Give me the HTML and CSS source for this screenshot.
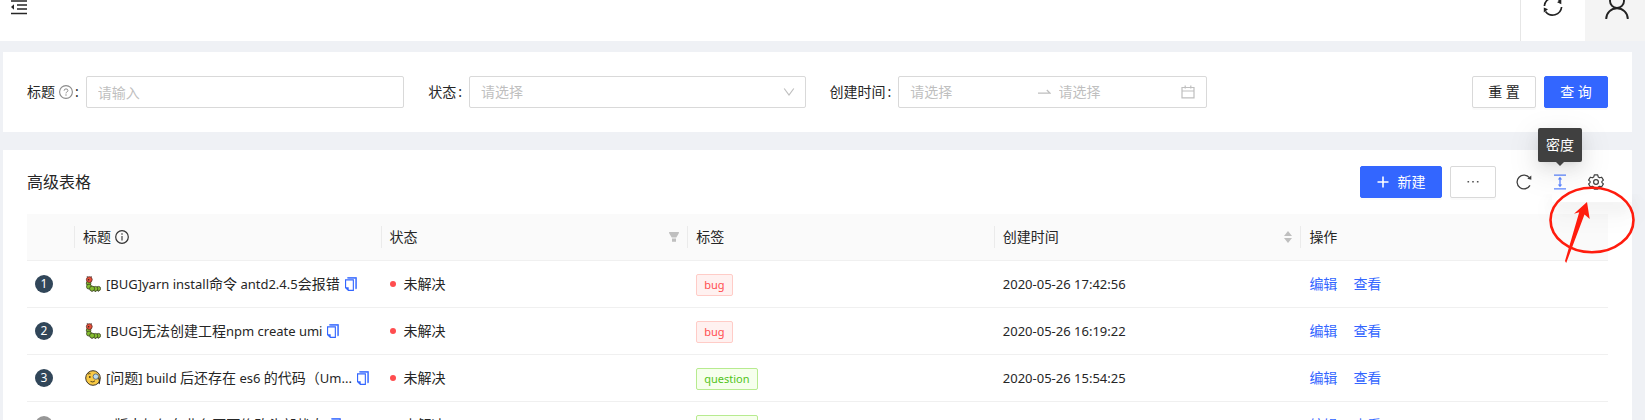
FILE: index.html
```
<!DOCTYPE html>
<html lang="zh-CN">
<head>
<meta charset="utf-8">
<meta name="viewport" content="width=device-width, initial-scale=1">
<title>高级表格</title>
<link rel="stylesheet" href="styles.css">
</head>
<body>
<svg class="sprite" aria-hidden="true">
  <symbol id="i-copy" viewBox="0 0 14 16"><path d="M4 1h8.200v12" fill="none" stroke="#9db8ff" stroke-width="1.600"/><path d="M3 .9h9.500v11.500M1.200 3h8.300v11.300H4.200L1.200 11.500z" fill="none" stroke="#3366ff" stroke-width="1.200"/><path d="M1 11h3.500v3.500z" fill="#3366ff"/></symbol>
  <symbol id="i-bug" viewBox="0 0 16 16"><g fill="#84bd2f" stroke="#38401f" stroke-width=".8"><circle cx="3.600" cy="7.200" r="2.300"/><circle cx="4" cy="10.600" r="2.500"/><circle cx="13.400" cy="12.600" r="2.200"/><circle cx="10.400" cy="12.800" r="2.400"/><circle cx="7.100" cy="12.600" r="2.500"/></g><path d="M7 15v.8M10.400 15v.8M13.300 14.600v1" stroke="#38401f"/><circle cx="4.300" cy="3.600" r="2.900" fill="#e8503a" stroke="#5a2a22" stroke-width=".8"/><circle cx="3.600" cy="3.700" r=".8" fill="#322"/><path d="M2.700 1 2 .2M5.800 1l.7-.8" stroke="#322" stroke-width=".8"/></symbol>
  <symbol id="i-monocle" viewBox="0 0 16 16"><circle cx="8" cy="8" r="7.300" fill="#f8c944" stroke="#40372a" stroke-width="1"/><circle cx="10.800" cy="6.600" r="2.700" fill="#b9dcef" stroke="#5c6670" stroke-width=".9"/><path d="M13.600 7.500q1.500 3 .5 6.500" fill="none" stroke="#333" stroke-width="1.300"/><path d="M3 4.200q1.200-1 2.600-.4M5.500 11.400q2.500 1.500 4.500-.6" fill="none" stroke="#4b3a18" stroke-width=".9"/><circle cx="4.800" cy="7" r=".9" fill="#4b3a18"/></symbol>
</svg>

<header class="topbar">
  <button class="fold" type="button" aria-label="收起菜单"><svg width="16" height="15" viewBox="0 0 16 15"><path d="M0 1h16M6 5h10M6 9h10M0 13.500h16" stroke="#262626" stroke-width="1.400"/><path d="M0 7l3-2.700v5.400z" fill="#262626"/></svg></button>
  <div class="topbar-right">
    <button class="top-action sync" type="button" aria-label="刷新"><svg width="22" height="18" viewBox="0 0 22 18"><path d="M2.400 6A9 9 0 0 1 18 .8M19.600 7A9 9 0 0 1 3.500 11.500" fill="none" stroke="#222" stroke-width="1.700"/><path d="M19.300-.8v5l-4.200-2zM1.800 12.500v-5l4.200 1.800z" fill="#222"/></svg></button>
    <button class="top-action user" type="button" aria-label="用户"><svg width="24" height="19" viewBox="0 0 24 19"><circle cx="12" cy="1" r="7" fill="none" stroke="#222" stroke-width="1.900"/><path d="M1.200 19a10.800 10.800 0 0 1 21.600 0" fill="none" stroke="#222" stroke-width="1.900"/></svg></button>
  </div>
</header>

<main class="content">
  <form class="card search">
    <div class="field">
      <label for="f-title">标题<svg class="hint" width="14" height="14" viewBox="0 0 14 14"><circle cx="7" cy="7" r="6.400" fill="none" stroke="#8c8c8c" stroke-width="1.100"/><path d="M5.100 5.700q0-1.800 1.900-1.800t1.900 1.600q0 1.100-1.200 1.600-.7.300-.7 1.300" fill="none" stroke="#8c8c8c"/><circle cx="7" cy="10" r=".7" fill="#8c8c8c"/></svg><span class="colon">:</span></label>
      <input id="f-title" class="control" type="text" placeholder="请输入">
    </div>
    <div class="field">
      <label for="f-state">状态<span class="colon">:</span></label>
      <div class="select-wrap">
        <select id="f-state" class="control"><option>请选择</option></select>
        <svg class="chevron" width="12" height="12" viewBox="0 0 12 12"><path d="M1.200 2.500 6 9l4.800-6.500" fill="none" stroke="#bfbfbf" stroke-width="1.200"/></svg>
      </div>
    </div>
    <div class="field">
      <label for="f-start">创建时间<span class="colon">:</span></label>
      <div class="control range">
        <input id="f-start" type="text" placeholder="请选择">
        <svg width="14" height="14" viewBox="0 0 14 14"><path d="M1 8.200h12L9.800 5" fill="none" stroke="#bfbfbf" stroke-width="1.200"/></svg>
        <input type="text" placeholder="请选择" aria-label="结束时间">
        <svg class="calendar" width="14" height="14" viewBox="0 0 14 14"><path d="M1 2.500h12v10.400H1zM1 6h12M4.200.5v3M9.800.5v3" fill="none" stroke="#bfbfbf" stroke-width="1.200"/></svg>
      </div>
    </div>
    <div class="actions">
      <button class="btn" type="reset">重 置</button>
      <button class="btn primary" type="button">查 询</button>
    </div>
  </form>

  <section class="card list">
    <div class="toolbar">
      <h1>高级表格</h1>
      <div class="tools">
        <button class="btn primary create" type="button"><svg width="12" height="12" viewBox="0 0 12 12"><path d="M6 .5v11M.5 6h11" stroke="#fff" stroke-width="1.600"/></svg>新建</button>
        <button class="btn more" type="button" aria-label="更多"><svg width="12" height="4" viewBox="0 0 12 4"><path d="M.5 1h1.600v1.600H.5zM5.200 1h1.600v1.600H5.200zM9.900 1h1.600v1.600H9.900z" fill="#555"/></svg></button>
        <div class="icons">
          <button class="icon" type="button" aria-label="刷新列表"><svg width="16" height="16" viewBox="0 0 16 16"><path d="M14 11.400A6.900 6.900 0 1 1 13.400 3.700" fill="none" stroke="#404040" stroke-width="1.300"/><path d="M15.300 1.600v4.200l-4-1z" fill="#404040"/></svg></button>
          <button class="icon density" type="button" aria-label="密度"><svg width="16" height="16" viewBox="0 0 16 16"><path d="M2 1.200h12M2 14.800h12M8 4v8" fill="none" stroke="#5c85ff" stroke-width="1.300"/><path d="M5.800 5.500 8 2.800l2.200 2.700zM5.800 10.500 8 13.200l2.200-2.700z" fill="#5c85ff"/></svg><span class="tip" role="tooltip">密度</span></button>
          <button class="icon" type="button" aria-label="设置"><svg width="16" height="16" viewBox="0 0 16 16"><path d="M6.300.9h3.400l.5 2 1.500.9 2-.6 1.700 2.900-1.500 1.300v1.200l1.500 1.300-1.700 2.900-2-.6-1.500.9-.5 2H6.300l-.5-2-1.500-.9-2 .6L.6 9.900l1.500-1.300V7.400L.6 6.100l1.700-2.900 2 .6 1.500-.9z" fill="none" stroke="#404040" stroke-width="1.200" stroke-linejoin="round"/><circle cx="8" cy="8" r="2.400" fill="none" stroke="#404040" stroke-width="1.200"/></svg></button>
        </div>
      </div>
      <div class="dropdown"></div>
      <svg class="mark" width="88" height="80" viewBox="0 0 88 80" aria-hidden="true"><ellipse cx="44" cy="35" rx="41.500" ry="32.300" fill="none" stroke="#ff1c0e" stroke-width="2.600"/><path d="M39 17 26 28.800l5.200-1.500L17 76l1.200 2L36.500 29.500l5.200 4.600z" fill="#ff1c0e"/></svg>
    </div>

    <table>
      <colgroup><col class="c-index"><col><col><col><col><col></colgroup>
      <thead>
        <tr>
          <th aria-label="序号"></th>
          <th><span class="head">标题<svg width="14" height="14" viewBox="0 0 14 14"><circle cx="7" cy="7" r="6.300" fill="none" stroke="#333" stroke-width="1.200"/><path d="M7 6v4.400" stroke="#333" stroke-width="1.100"/><circle cx="7" cy="4" r=".8" fill="#333"/></svg></span></th>
          <th><span class="head between">状态<svg width="12" height="12" viewBox="0 0 12 12"><path d="M1 1h10l-.3 1.500L8.300 6.500H3.700L1.300 2.500zM4 7.400h4v3.300H4z" fill="#bfbfbf"/></svg></span></th>
          <th>标签</th>
          <th><span class="head between sort">创建时间<svg width="8" height="12" viewBox="0 0 8 12"><path d="M4 0l4 5H0zM4 12l4-5H0z" fill="#bfbfbf"/></svg></span></th>
          <th>操作</th>
        </tr>
      </thead>
      <tbody>
        <tr>
          <td><span class="num">1</span></td>
          <td><div class="title"><svg class="emoji"><use href="#i-bug"/></svg><span class="text"><span class="en">[BUG]yarn install</span>命令<span class="en"> antd2.4.5</span>会报错</span><button class="copy" type="button" aria-label="复制"><svg><use href="#i-copy"/></svg></button></div></td>
          <td><span class="status">未解决</span></td>
          <td><span class="tag red">bug</span></td>
          <td class="en">2020-05-26 17:42:56</td>
          <td><span class="links"><a href="#">编辑</a><a href="#">查看</a></span></td>
        </tr>
        <tr>
          <td><span class="num">2</span></td>
          <td><div class="title"><svg class="emoji"><use href="#i-bug"/></svg><span class="text"><span class="en">[BUG]</span>无法创建工程<span class="en">npm create umi</span></span><button class="copy" type="button" aria-label="复制"><svg><use href="#i-copy"/></svg></button></div></td>
          <td><span class="status">未解决</span></td>
          <td><span class="tag red">bug</span></td>
          <td class="en">2020-05-26 16:19:22</td>
          <td><span class="links"><a href="#">编辑</a><a href="#">查看</a></span></td>
        </tr>
        <tr>
          <td><span class="num">3</span></td>
          <td><div class="title"><svg class="emoji"><use href="#i-monocle"/></svg><span class="text"><span class="en">[</span>问题<span class="en">] build </span>后还存在<span class="en"> es6 </span>的代码（<span class="en">Um...</span></span><button class="copy" type="button" aria-label="复制"><svg><use href="#i-copy"/></svg></button></div></td>
          <td><span class="status">未解决</span></td>
          <td><span class="tag green">question</span></td>
          <td class="en">2020-05-26 15:54:25</td>
          <td><span class="links"><a href="#">编辑</a><a href="#">查看</a></span></td>
        </tr>
        <tr>
          <td><span class="num rest">4</span></td>
          <td><div class="title"><span class="text"><span class="en">2.3.1</span>版本如何在业务页面修改头部状态</span><button class="copy" type="button" aria-label="复制"><svg><use href="#i-copy"/></svg></button></div></td>
          <td><span class="status">未解决</span></td>
          <td><span class="tag green">question</span></td>
          <td class="en">2020-05-26 15:46:55</td>
          <td><span class="links"><a href="#">编辑</a><a href="#">查看</a></span></td>
        </tr>
      </tbody>
    </table>
  </section>
</main>
</body>
</html>
```
FILE: styles.css
```
* { box-sizing: border-box; }
html { scrollbar-width: none; }
body {
  margin: 0;
  background: #eff1f5;
  color: #262626;
  font: 14px/22px "Noto Sans", "Noto Sans CJK SC", sans-serif;
}
button, input, select { font: inherit; color: inherit; margin: 0; }
button { border: 0; background: none; padding: 0; cursor: pointer; }
svg { display: block; flex: none; }
a { color: #3366ff; text-decoration: none; }
.sprite { position: absolute; width: 0; height: 0; }

.topbar {
  display: flex;
  justify-content: space-between;
  align-items: stretch;
  height: 41px;
  background: #fff;
}
.fold { align-self: flex-start; margin-left: 11px; }
.topbar-right { display: flex; border-left: 1px solid #e6e6e6; }
.top-action { display: flex; justify-content: center; align-items: flex-start; }
.sync { width: 64px; }
.user { width: 60px; padding-left: 4px; background: #f4f4f4; }

.content { padding: 11px 13px 0 3px; }
.card { background: #fff; padding: 0 24px; }
.search {
  display: grid;
  grid-template-columns: repeat(4, minmax(0, 1fr));
  column-gap: 24px;
  padding-block: 24px;
  margin-bottom: 18px;
}
.field { display: flex; align-items: center; }
.field label { display: flex; align-items: center; flex: none; }
.hint { margin-left: 4px; }
.colon { margin: 0 7px 0 2px; }
.control {
  width: 100%;
  min-width: 0;
  height: 32px;
  padding: 0 11px;
  border: 1px solid #d9d9d9;
  border-radius: 2px;
  background: #fff;
  outline: 0;
}
input::placeholder { color: #bfbfbf; opacity: 1; }
.select-wrap { position: relative; flex: 1; min-width: 0; }
select.control { display: block; appearance: none; color: #bfbfbf; }
.chevron { position: absolute; right: 11px; top: 10px; pointer-events: none; }
.range { display: flex; align-items: center; gap: 8px; }
.range input { flex: 1; width: 0; min-width: 0; padding: 0; border: 0; outline: 0; background: none; }
.calendar { margin-left: -4px; }

.actions { display: flex; justify-content: flex-end; gap: 8px; }
.btn {
  display: flex;
  align-items: center;
  justify-content: center;
  height: 32px;
  padding: 0 15px;
  border: 1px solid #d9d9d9;
  border-radius: 2px;
  background: #fff;
  box-shadow: 0 2px 0 rgba(0, 0, 0, .02);
}
.primary { border-color: #3366ff; background: #3366ff; color: #fff; }
.actions .btn { width: 64px; }

.toolbar {
  position: relative;
  display: flex;
  align-items: center;
  justify-content: space-between;
  height: 64px;
}
h1 { margin: 0; font-size: 16px; font-weight: 400; line-height: 24px; }
.tools { display: flex; gap: 8px; }
.create { width: 82px; gap: 9px; }
.more { width: 46px; }
.icons { display: flex; align-items: center; gap: 20px; padding: 0 4px 0 12px; }
.icon { position: relative; }
.tip {
  position: absolute;
  z-index: 3;
  bottom: 28px;
  left: 50%;
  transform: translateX(-50%);
  padding: 6px 8px;
  border-radius: 2px;
  background: #404040;
  color: #fff;
  white-space: nowrap;
  box-shadow: 0 3px 6px -4px rgba(0, 0, 0, .12), 0 6px 16px rgba(0, 0, 0, .08), 0 9px 28px 8px rgba(0, 0, 0, .05);
}
.tip::after {
  content: "";
  position: absolute;
  top: 100%;
  left: 50%;
  margin-left: -4px;
  border: 4px solid transparent;
  border-top-color: #404040;
  border-bottom: 0;
}
.dropdown {
  position: absolute;
  z-index: 1;
  top: 44px;
  right: -24px;
  width: 80px;
  height: 8px;
  background: #fff;
  box-shadow: 0 6px 16px rgba(0, 0, 0, .07), 0 12px 24px 4px rgba(0, 0, 0, .04);
  clip-path: inset(0 -40px -60px -60px);
}
.mark { position: absolute; z-index: 4; top: 35px; right: -28px; pointer-events: none; }

table { width: 100%; table-layout: fixed; border-collapse: separate; border-spacing: 0; }
.c-index { width: 48px; }
th, td {
  height: 47px;
  padding: 0 8px;
  border-bottom: 1px solid #f0f0f0;
  text-align: left;
  font-weight: 400;
  white-space: nowrap;
}
th { position: relative; background: #fafafa; }
th:not(:last-child)::after {
  content: "";
  position: absolute;
  top: 12px;
  right: 0;
  width: 1px;
  height: 22px;
  background: #ebebeb;
}
.head { display: flex; align-items: center; gap: 4px; }
.between { justify-content: space-between; }
.sort { padding-right: 1px; }
.en { font-size: 13px; }
.num {
  display: block;
  width: 18px;
  height: 18px;
  border-radius: 50%;
  background: #314659;
  color: #fff;
  font-size: 12px;
  line-height: 18px;
  text-align: center;
}
.rest { background: #979797; }
.title { display: flex; align-items: center; padding-left: 2px; }
.emoji { width: 16px; height: 16px; margin-right: 5px; }
.text { overflow: hidden; text-overflow: ellipsis; }
.copy { margin-left: 4px; }
.copy svg { width: 14px; height: 15px; }
.status { display: flex; align-items: center; gap: 8px; }
.status::before { content: ""; width: 6px; height: 6px; border-radius: 50%; background: #ff4d4f; }
.tag {
  display: inline-block;
  padding: 0 7px;
  border: 1px solid;
  border-radius: 2px;
  font-size: 11px;
  line-height: 20px;
  vertical-align: middle;
}
.red { color: #ff4d4f; background: #fff1f0; border-color: #ffccc7; }
.green { color: #52c41a; background: #f6ffed; border-color: #b7eb8f; }
.links { display: flex; gap: 16px; }
```
